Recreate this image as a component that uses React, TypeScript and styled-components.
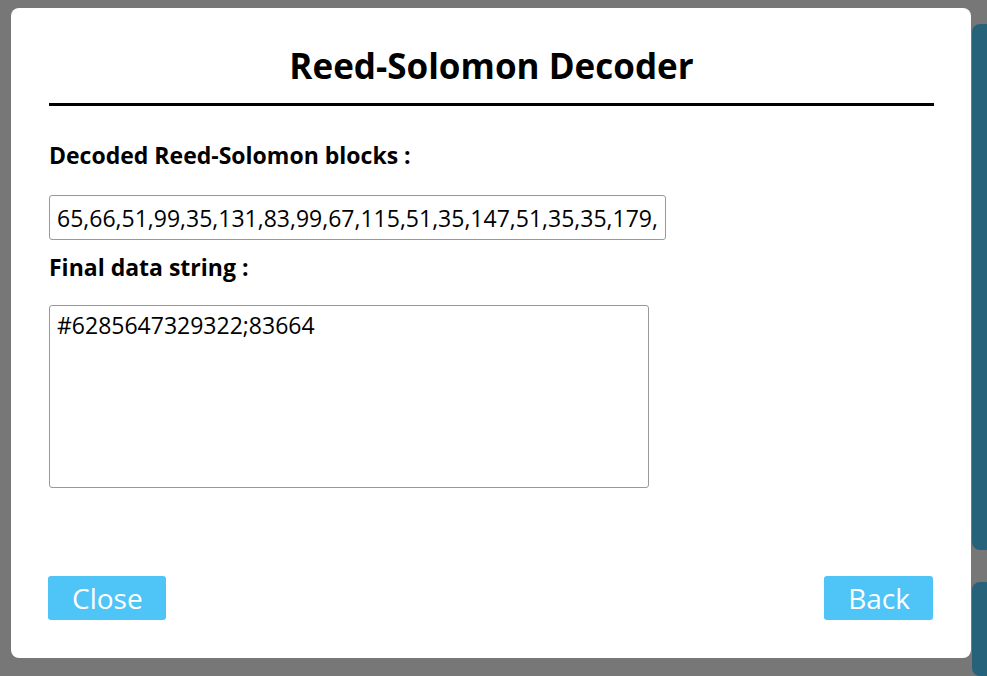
import styled, { createGlobalStyle } from 'styled-components';

const GlobalStyle = createGlobalStyle`
  * {
    box-sizing: border-box;
  }

  body {
    margin: 0;
    background: #eeeeee;
    font-family: 'Open Sans', 'Noto Sans', sans-serif;
    overflow: hidden;
  }
`;

const Page = styled.div`
  height: 676px;
  overflow: hidden;
  display: flex;
  justify-content: flex-end;
`;

const SideColumn = styled.div`
  width: 15px;
  padding-top: 24px;
  display: flex;
  flex-direction: column;
  gap: 32px;
`;

const SideCard = styled.div<{ $height: number }>`
  flex-shrink: 0;
  height: ${(p) => p.$height}px;
  background: #4fc4f7;
  border-radius: 8px 0 0 8px;
`;

const Overlay = styled.div`
  position: fixed;
  inset: 0;
  background: rgba(0, 0, 0, 0.5);
  padding: 8px 0 0 11px;
`;

const Modal = styled.div`
  width: 960px;
  height: 650px;
  background: #ffffff;
  border-radius: 8px;
  padding: 0 37px 38px 38px;
  display: flex;
  flex-direction: column;
`;

const Header = styled.div`
  border-bottom: 3px solid #000000;
  padding: 34px 0 13px;
`;

const Title = styled.h1`
  margin: 0;
  text-align: center;
  font-size: 35px;
  font-weight: 700;
  line-height: 48px;
  color: #000000;
`;

const Body = styled.div`
  display: flex;
  flex-direction: column;
  padding-top: 33px;
`;

const Label = styled.label`
  font-size: 23px;
  font-weight: 700;
  line-height: 32px;
  color: #000000;
`;

const BlocksInput = styled.input`
  width: 617px;
  height: 45px;
  margin: 24px 0 11px;
  padding: 0 7px;
  border: 1px solid #999999;
  border-radius: 3px;
  font-family: inherit;
  font-size: 23px;
  color: #000000;
  outline: none;
`;

const DataArea = styled.textarea`
  width: 600px;
  height: 183px;
  margin-top: 22px;
  padding: 3px 7px;
  border: 1px solid #999999;
  border-radius: 3px;
  font-family: inherit;
  font-size: 23px;
  line-height: 32px;
  color: #000000;
  resize: none;
  outline: none;
`;

const Actions = styled.div`
  margin: auto 1px 0 -1px;
  display: flex;
  justify-content: space-between;
`;

const Button = styled.button`
  height: 44px;
  padding: 0 23px 0 24px;
  background: #4fc4f7;
  border: none;
  border-radius: 3px;
  color: #ffffff;
  font-family: inherit;
  font-size: 28px;
  line-height: 44px;
  cursor: pointer;
`;

const blocks =
  '65,66,51,99,35,131,83,99,67,115,51,35,147,51,35,35,179,51,35,67,83,131,163,99,35,115';

export default function App() {
  return (
    <>
      <GlobalStyle />
      <Page>
        <SideColumn>
          <SideCard $height={526} />
          <SideCard $height={94} />
        </SideColumn>
      </Page>
      <Overlay>
        <Modal>
          <Header>
            <Title>Reed-Solomon Decoder</Title>
          </Header>
          <Body>
            <Label>Decoded Reed-Solomon blocks :</Label>
            <BlocksInput readOnly value={blocks} />
            <Label>Final data string :</Label>
            <DataArea readOnly value="#6285647329322;83664" />
          </Body>
          <Actions>
            <Button>Close</Button>
            <Button>Back</Button>
          </Actions>
        </Modal>
      </Overlay>
    </>
  );
}
